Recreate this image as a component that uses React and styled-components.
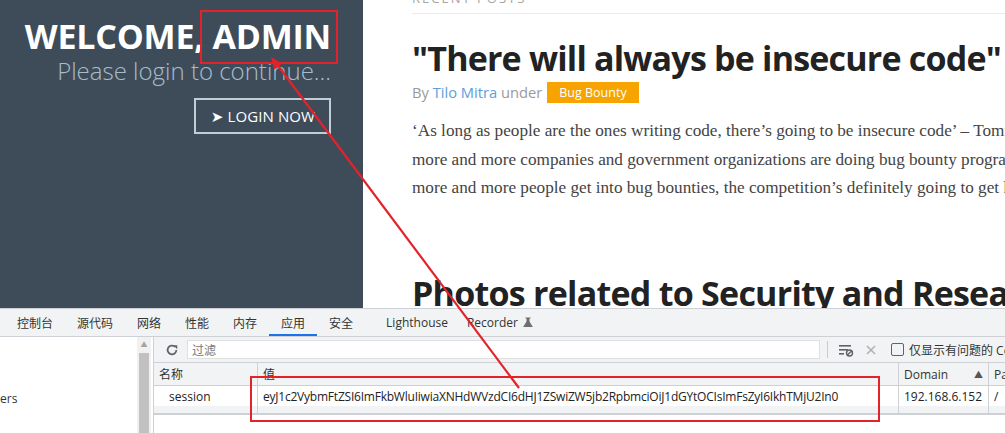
import styled, { createGlobalStyle } from "styled-components";

const GlobalStyle = createGlobalStyle`
    html, body {
        margin: 0;
        padding: 0;
        overflow: hidden;
        background: #fff;
    }
    body {
        font-family: "Open Sans", "Noto Sans CJK SC", sans-serif;
    }
`;

const Screen = styled.div`
    position: relative;
    width: 1005px;
    height: 433px;
    display: flex;
    flex-direction: column;
    overflow: hidden;
`;

const Page = styled.div`
    display: flex;
    height: 308px;
    flex-shrink: 0;
    overflow: hidden;
`;

const Sidebar = styled.aside`
    width: 363px;
    flex-shrink: 0;
    background: #3e4c5a;
    box-sizing: border-box;
    padding: 16px 32px 0 0;
    display: flex;
    flex-direction: column;
    align-items: flex-end;
`;

const Welcome = styled.h1`
    margin: 0;
    color: #fff;
    font: 700 34px/40px "Open Sans", sans-serif;
    letter-spacing: -0.2px;
`;

const Subtitle = styled.p`
    margin: 0;
    color: #a7bccb;
    font: 300 24px/30px "Open Sans", sans-serif;
`;

const LoginButton = styled.a`
    margin-top: 12px;
    border: 2px solid #c2ced6;
    color: #fff;
    font: 400 15px/32px "Open Sans", "DejaVu Sans", sans-serif;
    padding: 0 14px 0 15px;
    letter-spacing: 0.1px;
`;

const Content = styled.main`
    flex: 1;
    min-width: 0;
    overflow: hidden;
    padding-left: 49px;
`;

const Scrolled = styled.div`
    margin-top: -9px;
`;

const SectionLabel = styled.div`
    font: 400 13px/14px "Open Sans", sans-serif;
    color: #a5a5a5;
    letter-spacing: 2px;
    text-transform: uppercase;
    padding-bottom: 8px;
    border-bottom: 1px solid #eaeaea;
`;

const PostTitle = styled.h2`
    margin: 24px 0 0;
    white-space: nowrap;
    color: #222;
    font: 700 34px/40px "Open Sans", sans-serif;
    letter-spacing: -0.8px;
`;

const PostMeta = styled.div`
    margin-top: 3px;
    display: flex;
    align-items: center;
    gap: 5px;
    color: #9a9a9a;
    font: 400 14.7px/22px "Open Sans", sans-serif;
    white-space: nowrap;
`;

const Author = styled.span`
    color: #5ca0d6;
`;

const Category = styled.span`
    background: #f7a300;
    color: #fff;
    font-size: 12.5px;
    line-height: 21px;
    padding: 0 12px;
`;

const Excerpt = styled.p`
    margin: 14px 0 0;
    white-space: nowrap;
    color: #444;
    font: 400 17.2px/28.5px "Liberation Serif", serif;
`;

const SectionTitle = styled.h2`
    margin: 70px 0 0;
    white-space: nowrap;
    color: #222;
    font: 700 34px/40px "Open Sans", sans-serif;
    letter-spacing: -0.75px;
`;

/* ---------- devtools ---------- */

const DevTools = styled.section`
    flex: 1;
    display: flex;
    flex-direction: column;
    font-family: "Open Sans", "Noto Sans CJK SC", sans-serif;
    font-size: 12px;
    color: #303942;
    background: #fff;
`;

const TabBar = styled.nav`
    height: 27px;
    flex-shrink: 0;
    display: flex;
    align-items: stretch;
    padding-left: 5px;
    background: #f1f3f4;
    border-top: 1px solid #cdd0d4;
    border-bottom: 1px solid #cdd0d4;
`;

const Tab = styled.div`
    position: relative;
    display: flex;
    align-items: center;
    gap: 5px;
    padding: 0 ${(p) => p.$right ?? 12}px 0 ${(p) => p.$left ?? 12}px;
    color: #333;
    white-space: nowrap;
    ${(p) =>
        p.$active &&
        `
        &::after {
            content: "";
            position: absolute;
            left: 0;
            right: 0;
            bottom: 0;
            height: 2px;
            background: #1a73e8;
        }
    `}
`;

const Body = styled.div`
    flex: 1;
    display: flex;
    min-height: 0;
`;

const TreePane = styled.div`
    width: 137px;
    flex-shrink: 0;
    padding-top: 53px;
    color: #333;
`;

const Scrollbar = styled.div`
    width: 14px;
    flex-shrink: 0;
    background: #f1f1f1;
    display: flex;
    flex-direction: column;
    align-items: center;
    border-right: 2px solid #fff;
`;

const ScrollArrow = styled.div`
    height: 14px;
    display: flex;
    align-items: center;
    justify-content: center;
    color: #a3a3a3;
    font-size: 7px;
`;

const ScrollThumb = styled.div`
    margin-top: 2px;
    flex: 1;
    width: 10px;
    background: #c1c1c1;
`;

const Main = styled.div`
    flex: 1;
    min-width: 0;
    display: flex;
    flex-direction: column;
    border-left: 1px solid #cdd0d4;
`;

const Toolbar = styled.div`
    height: 25px;
    flex-shrink: 0;
    display: flex;
    align-items: center;
    background: #f1f3f4;
    padding-left: 8px;
    border-bottom: 1px solid #cdd0d4;
    white-space: nowrap;
`;

const IconButton = styled.span`
    display: flex;
    flex-shrink: 0;
    align-items: center;
    justify-content: center;
    width: ${(p) => p.$w || 20}px;
    color: #6e6e6e;
`;

const FilterInput = styled.div`
    width: 633px;
    flex-shrink: 0;
    height: 19px;
    margin-left: 5px;
    box-sizing: border-box;
    background: #fff;
    border: 1px solid #e0e0e0;
    padding-left: 4px;
    color: #777;
    display: flex;
    align-items: center;
`;

const Divider = styled.span`
    width: 1px;
    flex-shrink: 0;
    height: 17px;
    background: #ccc;
    margin: 0 7px;
`;

const CheckLabel = styled.label`
    display: flex;
    align-items: center;
    gap: 5px;
    margin-left: 6px;
    color: #333;
    white-space: nowrap;
`;

const CheckBox = styled.span`
    width: 11px;
    height: 11px;
    flex-shrink: 0;
    border: 1px solid #5f6368;
    border-radius: 2px;
`;

const Grid = styled.div`
    display: grid;
    grid-template-columns: 103px 641px 90px 1fr;
`;

const HeadCell = styled.div`
    height: 22px;
    background: #f1f3f4;
    border-bottom: 1px solid #cdd0d4;
    border-left: ${(p) => (p.$first ? "none" : "1px solid #cdd0d4")};
    padding-left: ${(p) => p.$pad || 5}px;
    display: flex;
    align-items: center;
    justify-content: space-between;
    padding-right: 5px;
    white-space: nowrap;
    overflow: hidden;
    color: #333;
`;

const Cell = styled.div`
    height: 20px;
    border-left: ${(p) => (p.$first ? "none" : "1px solid #cdd0d4")};
    padding-left: ${(p) => p.$pad || 5}px;
    display: flex;
    align-items: center;
    white-space: nowrap;
    overflow: hidden;
    color: #222;
    letter-spacing: ${(p) => (p.$tight ? "-0.22px" : "normal")};
`;

const FillerCell = styled.div`
    height: 7px;
    background: #f1f3f4;
    border-left: ${(p) => (p.$first ? "none" : "1px solid #cdd0d4")};
    border-bottom: 2px solid #cdd0d4;
`;

const SortArrow = styled.span`
    font-size: 9px;
    color: #555;
`;

const Annotation = styled.svg`
    position: absolute;
    left: 0;
    top: 0;
    pointer-events: none;
`;

const RefreshIcon = () => (
    <svg width="14" height="14" viewBox="0 0 16 16">
        <path d="M13 8a5 5 0 1 1-1.5-3.6" fill="none" stroke="#5f6368" strokeWidth="2" />
        <path d="M9.5 2.5h4.5v4.5z" fill="#5f6368" />
    </svg>
);

const ClearFilterIcon = () => (
    <svg width="16" height="14" viewBox="0 0 16 14">
        <rect x="1" y="2" width="12" height="1.6" fill="#5f6368" />
        <rect x="1" y="6" width="9" height="1.6" fill="#5f6368" />
        <rect x="1" y="10" width="5" height="1.6" fill="#5f6368" />
        <circle cx="11.5" cy="10" r="3" fill="none" stroke="#5f6368" strokeWidth="1.4" />
        <path d="M9.4 12.1l4.2-4.2" stroke="#5f6368" strokeWidth="1.4" />
    </svg>
);

const CloseIcon = () => (
    <svg width="12" height="12" viewBox="0 0 12 12">
        <path d="M2 2l8 8M10 2l-8 8" stroke="#b0b0b0" strokeWidth="1.5" />
    </svg>
);

const FlaskIcon = () => (
    <svg width="10" height="11" viewBox="0 0 10 11">
        <path d="M2.5 0.5h5v1h-1v3l3.3 5.5H0.2L3.5 4.5v-3h-1z" fill="#6e6e6e" />
    </svg>
);

const tabs = ["控制台", "源代码", "网络", "性能", "内存", "应用", "安全"];

export default function App() {
    return (
        <>
            <GlobalStyle />
            <Screen>
                <Page>
                    <Sidebar>
                        <Welcome>WELCOME, ADMIN</Welcome>
                        <Subtitle>Please login to continue...</Subtitle>
                        <LoginButton>➤ LOGIN NOW</LoginButton>
                    </Sidebar>
                    <Content>
                        <Scrolled>
                            <SectionLabel>Recent Posts</SectionLabel>
                            <PostTitle>"There will always be insecure code"</PostTitle>
                            <PostMeta>
                                <span>
                                    By <Author>Tilo Mitra</Author> under
                                </span>
                                <Category>Bug Bounty</Category>
                            </PostMeta>
                            <Excerpt>
                                ‘As long as people are the ones writing code, there’s going to be insecure code’ – Tommy DeVoss
                                <br />
                                more and more companies and government organizations are doing bug bounty programs
                                <br />
                                more and more people get into bug bounties, the competition’s definitely going to get harder
                            </Excerpt>
                            <SectionTitle>Photos related to Security and Research</SectionTitle>
                        </Scrolled>
                    </Content>
                </Page>

                <DevTools>
                    <TabBar>
                        {tabs.map((t) => (
                            <Tab key={t} $active={t === "应用"}>
                                {t}
                            </Tab>
                        ))}
                        <Tab $left={21} $right={7}>
                            Lighthouse
                        </Tab>
                        <Tab>
                            Recorder <FlaskIcon />
                        </Tab>
                    </TabBar>
                    <Body>
                        <TreePane>ers</TreePane>
                        <Scrollbar>
                            <ScrollArrow>▲</ScrollArrow>
                            <ScrollThumb />
                        </Scrollbar>
                        <Main>
                            <Toolbar>
                                <IconButton>
                                    <RefreshIcon />
                                </IconButton>
                                <FilterInput>过滤</FilterInput>
                                <Divider />
                                <IconButton $w={22}>
                                    <ClearFilterIcon />
                                </IconButton>
                                <IconButton $w={28}>
                                    <CloseIcon />
                                </IconButton>
                                <CheckLabel>
                                    <CheckBox />
                                    仅显示有问题的 Cookie
                                </CheckLabel>
                            </Toolbar>
                            <Grid>
                                <HeadCell $first>名称</HeadCell>
                                <HeadCell>值</HeadCell>
                                <HeadCell>
                                    Domain <SortArrow>▲</SortArrow>
                                </HeadCell>
                                <HeadCell>Path</HeadCell>

                                <Cell $first $pad={15}>
                                    session
                                </Cell>
                                <Cell $tight>
                                    eyJ1c2VybmFtZSI6ImFkbWluIiwiaXNHdWVzdCI6dHJ1ZSwiZW5jb2RpbmciOiJ1dGYtOCIsImFsZyI6IkhTMjU2In0
                                </Cell>
                                <Cell>192.168.6.152</Cell>
                                <Cell>/</Cell>

                                <FillerCell $first />
                                <FillerCell />
                                <FillerCell />
                                <FillerCell />
                            </Grid>
                        </Main>
                    </Body>
                </DevTools>

                <Annotation width="1005" height="433" viewBox="0 0 1005 433">
                    <rect x="201" y="11" width="136" height="52" fill="none" stroke="#e3222b" strokeWidth="2" />
                    <rect x="251" y="377" width="628" height="44" fill="none" stroke="#e3222b" strokeWidth="2" />
                    <line x1="519" y1="388" x2="276" y2="63" stroke="#e3222b" strokeWidth="2.2" />
                    <polygon points="271,57 274.2,69.6 282.2,63.6" fill="#e3222b" />
                </Annotation>
            </Screen>
        </>
    );
}
